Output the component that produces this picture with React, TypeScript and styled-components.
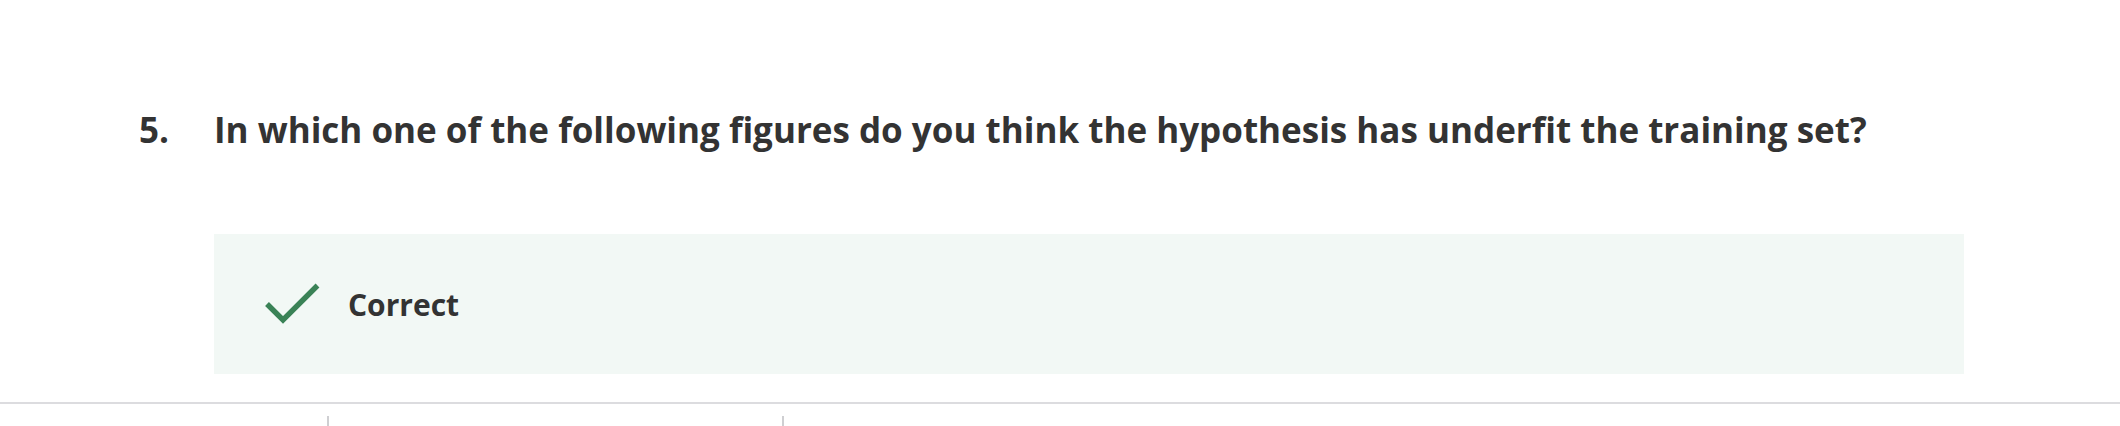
import styled, { createGlobalStyle } from "styled-components"

const GlobalStyle = createGlobalStyle`
  html, body {
    margin: 0;
    padding: 0;
    background: #fff;
  }
  body {
    font-family: "Open Sans", "Noto Sans", sans-serif;
    color: #333;
    overflow: hidden;
  }
`

const App = () => {
  return (
    <>
      <GlobalStyle />
      <Page>
        <QuestionWrapper>
          <QuestionRow>
            <QNumber>5.</QNumber>
            <QText>
              In which one of the following figures do you think the hypothesis has underfit the training set?
            </QText>
          </QuestionRow>
          <Feedback>
            <svg width="56" height="42" viewBox="0 0 56 42">
              <polyline
                points="3,21 19,37 53.5,2.5"
                fill="none"
                stroke="#3a8256"
                strokeWidth="5.4"
              />
            </svg>
            <FeedbackLabel>Correct</FeedbackLabel>
          </Feedback>
        </QuestionWrapper>
        <Divider />
        <BottomRow>
          <Tick $left={327} />
          <Tick $left={453} />
        </BottomRow>
      </Page>
    </>
  )
}

export default App

const Page = styled.div`
  width: 2120px;
  height: 426px;
  display: flex;
  flex-direction: column;
`

const QuestionWrapper = styled.div`
  flex-shrink: 0;
  padding: 106px 0 0 139px;
  height: 296px;
  box-sizing: border-box;
`

const QuestionRow = styled.div`
  display: flex;
  align-items: flex-start;
`

const QNumber = styled.span`
  width: 75px;
  flex-shrink: 0;
  font-size: 35px;
  line-height: 48px;
  font-weight: 700;
`

const QText = styled.h2`
  margin: 0;
  font-size: 35px;
  line-height: 48px;
  font-weight: 700;
  color: #333;
`

const Feedback = styled.div`
  margin: 80px 0 0 75px;
  width: 1750px;
  height: 140px;
  background-color: #f2f8f5;
  display: flex;
  align-items: center;
  padding-left: 50px;
  box-sizing: border-box;
  svg {
    flex-shrink: 0;
  }
`

const FeedbackLabel = styled.span`
  margin-left: 28px;
  font-size: 30px;
  font-weight: 700;
  color: #333;
`

const Divider = styled.div`
  flex-shrink: 0;
  margin-top: 106px;
  height: 2px;
  background-color: #dcdcdf;
`

const BottomRow = styled.div`
  flex: 1;
  display: flex;
  padding-top: 12px;
`

const Tick = styled.div<{ $left: number }>`
  width: 2px;
  height: 10px;
  background-color: #cfcfd2;
  margin-left: ${(p) => p.$left}px;
`
